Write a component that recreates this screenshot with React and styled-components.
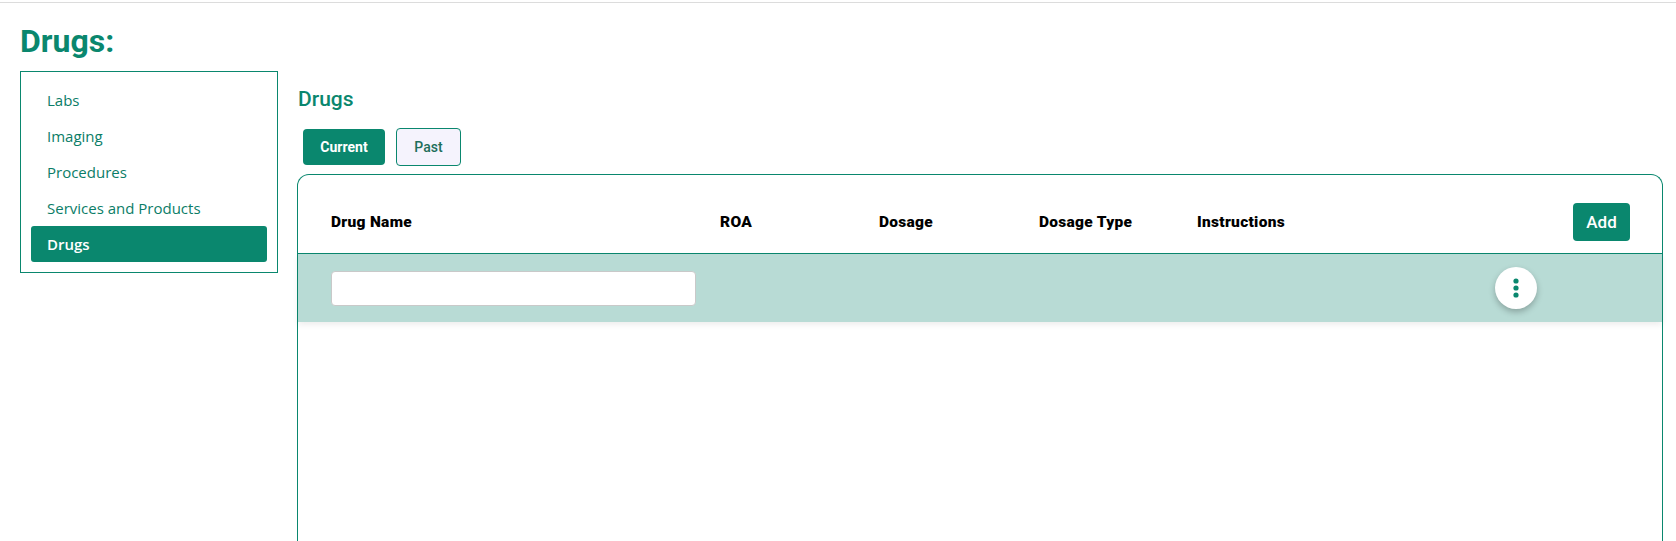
import styled, { createGlobalStyle } from 'styled-components';

const GlobalStyle = createGlobalStyle`
  html, body {
    margin: 0;
    padding: 0;
    background: #ffffff;
    font-family: Roboto, "Liberation Sans", sans-serif;
  }
  * {
    box-sizing: border-box;
  }
`;

const teal = '#0a876e';
const tealText = '#0b7d67';

const Page = styled.div`
  height: 541px;
  overflow: hidden;
  padding-top: 2px;
`;

const TopRule = styled.div`
  border-top: 1px solid #dcdcdc;
`;

const Content = styled.div`
  padding: 0 13px 0 20px;
`;

const Title = styled.h1`
  margin: 22px 0 14px;
  font-family: Roboto, sans-serif;
  font-size: 32px;
  line-height: 32px;
  font-weight: 700;
  color: ${teal};
`;

const Layout = styled.div`
  display: flex;
  align-items: flex-start;
`;

const Sidebar = styled.nav`
  width: 258px;
  flex-shrink: 0;
  border: 1px solid ${teal};
  padding: 10px;
  display: flex;
  flex-direction: column;
`;

const NavItem = styled.div`
  height: 36px;
  display: flex;
  align-items: center;
  padding-left: 16px;
  border-radius: 3px;
  font-family: "Open Sans", sans-serif;
  font-size: 15px;
  font-weight: ${(p) => (p.$active ? 600 : 500)};
  color: ${(p) => (p.$active ? '#ffffff' : tealText)};
  background: ${(p) => (p.$active ? teal : 'transparent')};
`;

const Main = styled.section`
  flex: 1;
  margin-left: 19px;
  padding-top: 16px;
`;

const Heading = styled.h2`
  margin: 0 0 17px 1px;
  font-family: Roboto, sans-serif;
  font-size: 21px;
  line-height: 24px;
  font-weight: 500;
  color: ${teal};
`;

const Tabs = styled.div`
  display: flex;
  align-items: center;
  gap: 11px;
  margin-left: 6px;
  margin-bottom: 8px;
`;

const Tab = styled.button`
  font-family: Roboto, sans-serif;
  font-size: 14px;
  border-radius: 4px;
  cursor: pointer;
  height: ${(p) => (p.$active ? '36px' : '38px')};
  padding: 0 16px;
  font-weight: ${(p) => (p.$active ? 700 : 500)};
  color: ${(p) => (p.$active ? '#ffffff' : '#1d6e5b')};
  background: ${(p) => (p.$active ? teal : '#f5f3fd')};
  border: ${(p) => (p.$active ? 'none' : `1px solid ${teal}`)};
  min-width: ${(p) => (p.$active ? '82px' : '65px')};
`;

const Card = styled.div`
  border: 1px solid ${teal};
  border-bottom: none;
  border-radius: 12px 12px 0 0;
  min-height: 420px;
`;

const Row = styled.div`
  display: grid;
  grid-template-columns: 389px 159px 160px 158px 1fr 57px;
  align-items: center;
  padding: ${(p) => p.$pad};
`;

const HeaderRow = styled(Row)`
  border-bottom: 1px solid ${teal};
`;

const BodyRow = styled(Row)`
  background: #b8dbd5;
  box-shadow: 0 3px 6px rgba(0, 0, 0, 0.07);
`;

const HeadCell = styled.div`
  font-family: Roboto, sans-serif;
  font-size: 15.5px;
  font-weight: 900;
  letter-spacing: 0.3px;
  color: #000000;
`;

const AddButton = styled.button`
  grid-column: 6;
  width: 57px;
  height: 38px;
  border: none;
  border-radius: 4px;
  background: ${teal};
  color: #ffffff;
  font-family: Roboto, sans-serif;
  font-size: 17px;
  font-weight: 500;
  padding: 0;
`;

const NameInput = styled.input`
  width: 365px;
  height: 35px;
  border: 1px solid #c9c9c9;
  border-radius: 4px;
  background: #ffffff;
  padding: 0 10px;
  outline: none;
`;

const KebabButton = styled.button`
  grid-column: 5;
  justify-self: end;
  margin-right: 36px;
  width: 42px;
  height: 42px;
  border-radius: 50%;
  border: none;
  background: #ffffff;
  box-shadow: 0 3px 6px rgba(0, 0, 0, 0.25);
  display: flex;
  align-items: center;
  justify-content: center;
  padding: 0;
`;

const KebabIcon = () => (
  <svg width="6" height="20" viewBox="0 0 6 20">
    <circle cx="3" cy="3" r="2.6" fill={teal} />
    <circle cx="3" cy="10" r="2.6" fill={teal} />
    <circle cx="3" cy="17" r="2.6" fill={teal} />
  </svg>
);

const navItems = ['Labs', 'Imaging', 'Procedures', 'Services and Products', 'Drugs'];
const columns = ['Drug Name', 'ROA', 'Dosage', 'Dosage Type', 'Instructions'];

export default function App() {
  return (
    <Page>
      <GlobalStyle />
      <TopRule />
      <Content>
        <Title>Drugs:</Title>
        <Layout>
          <Sidebar>
            {navItems.map((item) => (
              <NavItem key={item} $active={item === 'Drugs'}>
                {item}
              </NavItem>
            ))}
          </Sidebar>
          <Main>
            <Heading>Drugs</Heading>
            <Tabs>
              <Tab $active>Current</Tab>
              <Tab>Past</Tab>
            </Tabs>
            <Card>
              <HeaderRow $pad="28px 32px 12px 33px">
                {columns.map((c) => (
                  <HeadCell key={c}>{c}</HeadCell>
                ))}
                <AddButton>Add</AddButton>
              </HeaderRow>
              <BodyRow $pad="13px 32px 13px 33px">
                <NameInput />
                <KebabButton aria-label="More">
                  <KebabIcon />
                </KebabButton>
              </BodyRow>
            </Card>
          </Main>
        </Layout>
      </Content>
    </Page>
  );
}
